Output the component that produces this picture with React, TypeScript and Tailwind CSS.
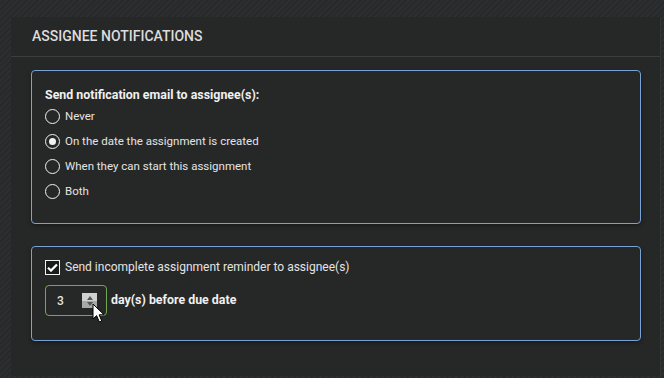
import React, { useState } from 'react';

const options = [
  'Never',
  'On the date the assignment is created',
  'When they can start this assignment',
  'Both',
];

const Radio: React.FC<{ checked: boolean }> = ({ checked }) => (
  <span className="flex h-[15px] w-[15px] items-center justify-center rounded-full border-[1.5px] border-[#f2f2f2]">
    {checked && <span className="h-[7px] w-[7px] rounded-full bg-[#f2f2f2]" />}
  </span>
);

const Cursor: React.FC = () => (
  <svg className="absolute left-[46px] top-[17px]" width="14" height="21" viewBox="0 0 14 21">
    <path
      d="M1 1 L1 16 L4.6 12.6 L7.4 19 L9.8 18 L7.1 11.8 L12 11.8 Z"
      fill="#ffffff"
      stroke="#000000"
      strokeWidth="1"
      strokeLinejoin="round"
    />
  </svg>
);

const App: React.FC = () => {
  const [choice, setChoice] = useState(1);
  const [remind, setRemind] = useState(true);

  return (
    <div
      className="h-[378px] w-[664px] overflow-hidden bg-[repeating-linear-gradient(135deg,#2c2e2f_0px,#2c2e2f_2px,#27292a_2px,#27292a_4px)] pl-[11px] pt-[17px] text-[12px] text-[#e4e4e4]"
      style={{ fontFamily: 'Roboto, "Liberation Sans", sans-serif' }}
    >
      <div className="h-[359px] w-[650px] rounded-tr-[2px] border-r border-[#333535] bg-[#262727]">
        <div className="flex h-[39px] items-center pl-[21px] text-[14px] font-medium text-[#dcdcdc]">
          ASSIGNEE NOTIFICATIONS
        </div>
        <div className="h-px bg-[#3c3d3d]" />

        <div className="px-[20px] pt-[13px]">
          <div className="h-[154px] w-[610px] rounded-[4px] border border-[#7aa0d8] pl-[13px] pt-[16px] shadow-[0_2px_4px_rgba(0,0,0,0.35)]">
            <div className="h-[16px] text-[12.4px] leading-[16px] font-bold text-[#f0f0f0]">
              Send notification email to assignee(s):
            </div>
            <div className="mt-[1px] flex flex-col">
              {options.map((o, i) => (
                <label
                  key={o}
                  onClick={() => setChoice(i)}
                  className="flex h-[25px] cursor-pointer items-center gap-[5px] text-[11.5px]"
                >
                  <Radio checked={choice === i} />
                  <span>{o}</span>
                </label>
              ))}
            </div>
          </div>

          <div className="mt-[22px] h-[95px] w-[610px] rounded-[4px] border border-[#7aa0d8] pl-[13px] pt-[10px] shadow-[0_2px_4px_rgba(0,0,0,0.35)]">
            <label
              onClick={() => setRemind(!remind)}
              className="flex h-[20px] cursor-pointer items-center gap-[5px]"
            >
              <span className="flex h-[15px] w-[15px] items-center justify-center border-[1.5px] border-[#f2f2f2] bg-[#1b1b1b]">
                {remind && (
                  <svg width="11" height="9" viewBox="0 0 11 9">
                    <path d="M1 4.8 L4 7.6 L10 1.4" fill="none" stroke="#ffffff" strokeWidth="2.2" />
                  </svg>
                )}
              </span>
              <span>Send incomplete assignment reminder to assignee(s)</span>
            </label>

            <div className="mt-[8px] flex items-center gap-[4px]">
              <div className="relative flex h-[31px] w-[62px] items-center rounded-[4px] border border-[#73a853] pl-[11px]">
                <span className="font-medium">3</span>
                <div className="ml-auto mr-[9px] flex h-[15px] w-[15px] flex-col">
                  <div className="flex h-[8px] items-end justify-center bg-[#d0d0d0]">
                    <span className="mb-[1px] h-0 w-0 border-x-[3.5px] border-b-[4px] border-x-transparent border-b-[#555]" />
                  </div>
                  <div className="flex h-[7px] items-start justify-center bg-[#a8a8a8]">
                    <span className="mt-[1px] h-0 w-0 border-x-[3.5px] border-t-[4px] border-x-transparent border-t-[#555]" />
                  </div>
                </div>
                <Cursor />
              </div>
              <span className="text-[12.4px] font-bold text-[#f0f0f0]">day(s) before due date</span>
            </div>
          </div>
        </div>
      </div>
    </div>
  );
};

export default App;
